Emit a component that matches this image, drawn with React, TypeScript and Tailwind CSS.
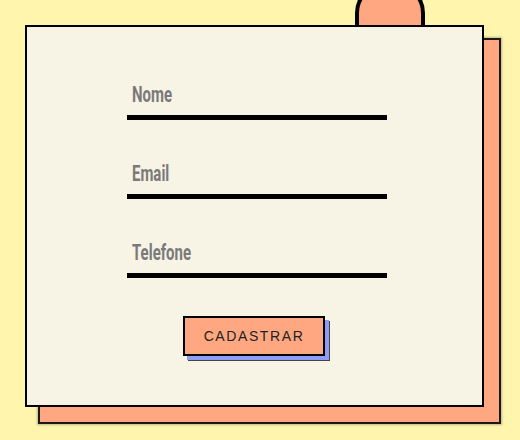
import React from "react";

const fields = ["Nome", "Email", "Telefone"];

function Field({ label }: { label: string }) {
  return (
    <label className="flex w-[260px] flex-col">
      <span className="ml-[5px] block h-[26px] origin-left scale-x-[0.68] whitespace-nowrap pt-[4px] text-[22px] leading-none font-bold text-[#7a7a7a] [font-family:Roboto,sans-serif]">
        {label}
      </span>
      <input
        type="text"
        aria-label={label}
        className="block h-[14px] w-full border-b-[5px] border-black bg-transparent outline-none"
      />
    </label>
  );
}

export default function App() {
  return (
    <div className="relative w-[520px] h-[440px] bg-[#fff5ad] overflow-hidden pt-[25px] pl-[25px]">
      <div className="absolute left-[355px] top-[-17px] w-[70px] h-[74px] rounded-[30px] border-4 border-black bg-[#ffa781]" />
      <form className="relative flex h-[382px] w-[459px] flex-col items-start border-2 border-black bg-[#f7f3e5] pl-[100px] pt-[53px] shadow-[15px_15px_0_0_#ffa781,15px_15px_0_2px_#1a1a1a,15px_15px_2px_3px_rgba(0,0,0,0.25)]">
        <div className="flex flex-col gap-[39px]">
          {fields.map((f) => (
            <Field key={f} label={f} />
          ))}
        </div>
        <button
          type="button"
          className="mt-[38px] ml-[56px] h-[40px] w-[142px] border-2 border-black bg-[#ffa781] text-[14px] tracking-[1.6px] text-[#222] shadow-[4px_4px_0_#8f9cf7,5px_5px_0_#444] [font-family:'Liberation_Sans',Arial,sans-serif]"
        >
          CADASTRAR
        </button>
      </form>
    </div>
  );
}
